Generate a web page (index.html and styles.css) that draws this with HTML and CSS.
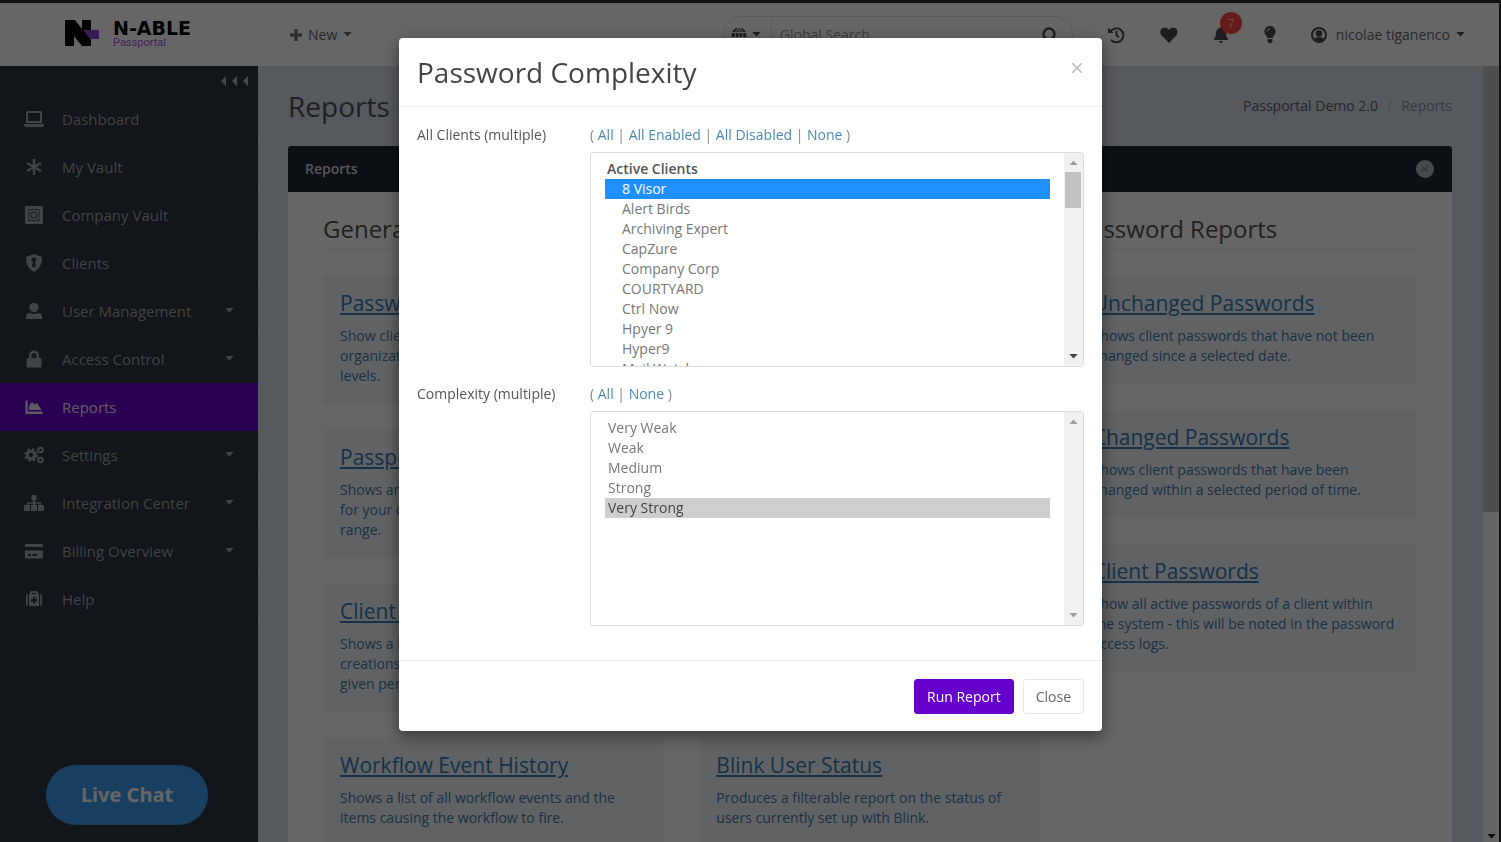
FILE: index.html
```html
<!DOCTYPE html>
<html lang="en">
<head>
<meta charset="utf-8">
<title>Passportal - Reports</title>
<link rel="stylesheet" href="styles.css">
</head>
<body>
<svg class="sprite" aria-hidden="true">
  <symbol id="caret" viewBox="0 0 10 6"><path d="M0 0h10L5 5.5z"/></symbol>
  <symbol id="plus" viewBox="0 0 12 12"><path d="M4.5 0h3v4.500H12v3H7.500V12h-3V7.500H0v-3h4.500z"/></symbol>
</svg>

<header class="topbar">
  <a class="logo" href="#">
    <svg class="logo-mark" viewBox="0 0 35 27" aria-hidden="true">
      <path class="purple" d="M17 10h17v9H24z"/>
      <path d="M0 0h10l7 9V0h9v10h-8l8 10v6h-9L9 16v10H0z"/>
    </svg>
    <span class="logo-text"><strong>N-ABLE</strong><small>Passportal</small></span>
  </a>
  <button class="plain new-button"><svg class="i12"><use href="#plus"/></svg>New<svg class="caret"><use href="#caret"/></svg></button>
  <form class="search" role="search">
    <button type="button" class="plain scope" aria-label="Search scope">
      <svg class="i16" viewBox="0 0 16 16"><circle cx="8" cy="8" r="7.500"/><path class="cut" d="M0 5.500h16M0 10.500h16M8 0v16M8 0C3 4 3 12 8 16M8 0c5 4 5 12 0 16"/></svg>
      <svg class="caret"><use href="#caret"/></svg>
    </button>
    <input type="search" placeholder="Global Search" aria-label="Global Search">
    <button type="button" class="plain go" aria-label="Search"><svg class="i16 line" viewBox="0 0 16 16"><circle cx="7" cy="7" r="5.500"/><path d="M11 11l4 4"/></svg></button>
  </form>
  <nav class="tools" aria-label="Tools">
    <button class="plain" aria-label="History"><svg class="i18 line thin" viewBox="0 0 18 18"><path d="M3.500 5.500A7 7 0 1 1 4 13.800M9.500 5v4.500l2.500 1.700"/><path class="solid" d="M1 1.500v5.500h5.500z"/></svg></button>
    <button class="plain" aria-label="Favorites"><svg class="i18" viewBox="0 0 18 18"><path d="M9 17L1.600 9.400C-.2 7.500 0 4.200 2 2.600c2-1.700 4.600-1.200 6.200.5l.8.900.8-.9c1.600-1.700 4.200-2.200 6.200-.5 2 1.600 2.200 4.900.4 6.800z"/></svg></button>
    <button class="plain bell" aria-label="Notifications"><svg class="i16" viewBox="0 0 16 16"><path d="M8 0c.7 0 1.200.5 1.200 1.100C11.600 1.700 13 3.600 13 6c0 3.500 1 4.600 2 5.600.4.500.1 1.400-.8 1.400H1.800C.9 13 .6 12.100 1 11.600 2 10.600 3 9.500 3 6c0-2.400 1.400-4.300 3.800-4.900C6.800.5 7.300 0 8 0zM6 14h4a2 2 0 0 1-4 0z"/></svg><span class="badge">7</span></button>
    <button class="plain bulb" aria-label="Tips"><svg viewBox="0 0 12 17"><path d="M6 0a5.500 5.500 0 0 1 4.300 9C9.400 10.100 8.800 11 8.600 12H3.400c-.2-1-.8-1.900-1.700-3A5.500 5.500 0 0 1 6 0zM3.500 13h5v2L7.500 17h-3l-1-2z"/><path class="cut" d="M3.200 5.500Q3.200 3 6 2.700"/></svg></button>
    <button class="plain user"><svg class="i16" viewBox="0 0 16 16"><circle class="ring" cx="8" cy="8" r="7"/><circle cx="8" cy="6.500" r="3.200"/><path d="M2.500 12.200C3.800 10.500 5.500 10.200 8 10.200s4.200.3 5.500 2C12.300 14 10.300 15 8 15s-4.300-1-5.500-2.800z"/></svg><span>nicolae tiganenco</span><svg class="caret"><use href="#caret"/></svg></button>
  </nav>
</header>

<div class="shell">
  <aside class="sidebar">
    <button class="plain collapse" aria-label="Collapse menu"><svg viewBox="0 0 28 10"><path d="M5 0v10L0 5zM16 0v10l-5-5zM27 0v10l-5-5z"/></svg></button>
    <nav class="menu" aria-label="Main">
      <a href="#"><svg viewBox="0 0 20 18"><path fill-rule="evenodd" d="M3.500 1h13A1.500 1.500 0 0 1 18 2.500V13H2V2.500A1.500 1.500 0 0 1 3.500 1zM4 3v8h12V3zM0 14h20v1a2 2 0 0 1-2 2H2a2 2 0 0 1-2-2z"/></svg><span>Dashboard</span></a>
      <a href="#"><svg viewBox="0 0 20 18"><path class="stroke" d="M10 1v16M3 5l14 8M17 5L3 13"/></svg><span>My Vault</span></a>
      <a href="#"><svg viewBox="0 0 20 18"><path fill-rule="evenodd" d="M2 0h16a1 1 0 0 1 1 1v16a1 1 0 0 1-1 1H2a1 1 0 0 1-1-1V1a1 1 0 0 1 1-1zM4.500 3v12h11V3z"/><path fill-rule="evenodd" d="M5.200 3.700h9.600v10.600H5.200zM10 5.500a3.500 3.500 0 1 0 0 7 3.500 3.500 0 0 0 0-7z"/><circle cx="10" cy="9" r="2.600"/></svg><span>Company Vault</span></a>
      <a href="#"><svg viewBox="0 0 20 18"><path fill-rule="evenodd" d="M10 0l8 3c0 7-2.500 12-8 15C4.500 15 2 10 2 3zm0 3.500a2.200 2.200 0 0 0-1.200 4.200L8 13h4l-.8-5.300A2.200 2.200 0 0 0 10 3.500z"/></svg><span>Clients</span></a>
      <a href="#"><svg viewBox="0 0 20 18"><circle cx="10" cy="5.500" r="4.700"/><path d="M2 17v-2.500C2 12 4 11 6 11a9 9 0 0 0 8 0c2 0 4 1 4 3.500V17z"/></svg><span>User Management</span><svg class="caret"><use href="#caret"/></svg></a>
      <a href="#"><svg viewBox="0 0 20 18"><path fill-rule="evenodd" d="M5 8V5.500a5 5 0 0 1 10 0V8h1a1.500 1.500 0 0 1 1.500 1.500V16a1.500 1.500 0 0 1-1.500 1.500H4A1.500 1.500 0 0 1 2.500 16V9.500A1.500 1.500 0 0 1 4 8zm2.500 0h5V5.500a2.500 2.500 0 0 0-5 0z"/></svg><span>Access Control</span><svg class="caret"><use href="#caret"/></svg></a>
      <a href="#" class="active" aria-current="page"><svg viewBox="0 0 20 18"><path d="M1.500 2.500h2.200v11H18.500V16h-17zM5 12V8l3-4 2.500 2.500L13 5l4.500 7z"/></svg><span>Reports</span></a>
      <a href="#"><svg viewBox="0 0 20 18"><circle class="gear" cx="7" cy="9" r="3.700"/><circle class="teeth" cx="7" cy="9" r="5.700"/><circle class="ring" cx="16.500" cy="4" r="2.300"/><circle class="ring" cx="16.500" cy="14" r="2.300"/></svg><span>Settings</span><svg class="caret"><use href="#caret"/></svg></a>
      <a href="#"><svg viewBox="0 0 20 18"><path d="M7.500 1h5v5H11v2.200h6V11h3v6h-6v-6h1.500V9.700H11V11h2v6H7v-6h2V9.700H4.500V11H6v6H0v-6h3V8.200h6V6H7.500z"/></svg><span>Integration Center</span><svg class="caret"><use href="#caret"/></svg></a>
      <a href="#"><svg viewBox="0 0 20 18"><path fill-rule="evenodd" d="M1.500 2h17l.5 3H1zM1 8.500h18V15a1.500 1.500 0 0 1-1.500 1.500h-15A1.500 1.500 0 0 1 1 15zM4 12v2h3v-2zm4.500 0v2H13v-2z"/></svg><span>Billing Overview</span><svg class="caret"><use href="#caret"/></svg></a>
      <a href="#"><svg viewBox="0 0 20 18"><path fill-rule="evenodd" d="M6 4V2.500A1.500 1.500 0 0 1 7.500 1h5A1.500 1.500 0 0 1 14 2.500V4h1v12H5V4zm2 0h4V3H8zm1 3v2H7v2.500h2v2h2.200v-2H13V9h-1.800V7zM3.800 4v12A2 2 0 0 1 2 14V6a2 2 0 0 1 1.800-2zm12.400 0A2 2 0 0 1 18 6v8a2 2 0 0 1-1.800 2z"/></svg><span>Help</span></a>
    </nav>
  </aside>

  <main class="page">
    <div class="page-head">
      <h1>Reports</h1>
      <nav class="crumbs" aria-label="Breadcrumb"><a href="#">Passportal Demo 2.0</a><i>/</i><span>Reports</span></nav>
    </div>
    <section class="panel">
      <div class="panel-head"><h2>Reports</h2><button class="plain" aria-label="Close panel"><svg class="close-dot" viewBox="0 0 18 18"><circle cx="9" cy="9" r="9"/><path d="M6 6l6 6M12 6l-6 6"/></svg></button></div>
      <div class="columns">
        <div class="column">
          <h3>General Reports</h3>
          <a class="card" href="#"><b>Password Complexity</b><span>Show client passwords in your<br>organization by their complexity<br>levels.</span></a>
          <a class="card" href="#"><b>Passportal Activity</b><span>Shows an overview of the activity<br>for your organization in a date<br>range.</span></a>
          <a class="card" href="#"><b>Client Activity</b><span>Shows a list of all client<br>creations and changes over a<br>given period.</span></a>
          <a class="card" href="#"><b>Workflow Event History</b><span>Shows a list of all workflow events and the<br>items causing the workflow to fire.</span></a>
        </div>
        <div class="column">
          <h3>User Reports</h3>
          <a class="card" href="#"><b>User Activity</b><span>Shows the activity of each user<br>of your organization in a date<br>range.</span></a>
          <a class="card" href="#"><b>User Access</b><span>Shows the clients and folders<br>that each user is able<br>to open.</span></a>
          <a class="card" href="#"><b>User Permissions</b><span>Shows the roles and groups<br>that are assigned to<br>each user.</span></a>
          <a class="card" href="#"><b>Blink User Status</b><span>Produces a filterable report on the status of<br>users currently set up with Blink.</span></a>
        </div>
        <div class="column">
          <h3>Password Reports</h3>
          <a class="card" href="#"><b>Unchanged Passwords</b><span>Shows client passwords that have not been<br>changed since a selected date.</span></a>
          <a class="card" href="#"><b>Changed Passwords</b><span>Shows client passwords that have been<br>changed within a selected period of time.</span></a>
          <a class="card" href="#"><b>Client Passwords</b><span>Show all active passwords of a client within<br>the system - this will be noted in the password<br>access logs.</span></a>
        </div>
      </div>
    </section>
  </main>
  <div class="page-bar" aria-hidden="true"><i class="thumb"></i><svg class="arrow"><use href="#caret"/></svg></div>
</div>

<button class="live-chat">Live Chat</button>

<div class="backdrop">
  <div class="modal" role="dialog" aria-modal="true" aria-labelledby="modal-title">
    <div class="modal-head"><h2 id="modal-title">Password Complexity</h2><button class="plain" aria-label="Close"><svg viewBox="0 0 10 10"><path d="M0 0l10 10M10 0L0 10"/></svg></button></div>
    <form class="modal-body">
      <label for="clients">All Clients (multiple)</label>
      <div class="field">
        <div class="picks">( <a href="#">All</a> | <a href="#">All Enabled</a> | <a href="#">All Disabled</a> | <a href="#">None</a> )</div>
        <div class="listbox">
          <select id="clients" multiple>
            <optgroup label="Active Clients">
              <option selected>8 Visor</option>
              <option>Alert Birds</option>
              <option>Archiving Expert</option>
              <option>CapZure</option>
              <option>Company Corp</option>
              <option>COURTYARD</option>
              <option>Ctrl Now</option>
              <option>Hpyer 9</option>
              <option>Hyper9</option>
              <option>Mail Watch</option>
            </optgroup>
          </select>
          <div class="list-bar" aria-hidden="true"><svg class="arrow up"><use href="#caret"/></svg><i class="thumb"></i><svg class="arrow on"><use href="#caret"/></svg></div>
        </div>
      </div>
      <label for="complexity">Complexity (multiple)</label>
      <div class="field">
        <div class="picks">( <a href="#">All</a> | <a href="#">None</a> )</div>
        <div class="listbox">
          <select id="complexity" class="idle" multiple>
            <option>Very Weak</option>
            <option>Weak</option>
            <option>Medium</option>
            <option>Strong</option>
            <option selected>Very Strong</option>
          </select>
          <div class="list-bar" aria-hidden="true"><svg class="arrow up"><use href="#caret"/></svg><svg class="arrow"><use href="#caret"/></svg></div>
        </div>
      </div>
    </form>
    <div class="modal-foot"><button class="run">Run Report</button><button class="close">Close</button></div>
  </div>
</div>
</body>
</html>
```
FILE: styles.css
```css
* { box-sizing: border-box; }
body {
  margin: 0;
  height: 100vh;
  overflow: hidden;
  display: flex;
  flex-direction: column;
  border-top: 3px solid #111213;
  border-right: 2px solid #111213;
  font: 14px/20px "Open Sans", sans-serif;
  color: #676a6c;
}
a { color: inherit; text-decoration: none; }
h1, h2, h3 { margin: 0; font-weight: 400; }
svg { fill: currentColor; display: block; flex: none; }
.sprite { position: absolute; width: 0; height: 0; }
.plain { border: 0; padding: 0; background: none; color: inherit; font: inherit; display: flex; align-items: center; }
.caret { width: 9px; height: 5px; }
.i12 { width: 12px; height: 12px; }
.i16 { width: 16px; height: 16px; }
.i18 { width: 18px; height: 18px; }
.cut { stroke: #fff; fill: none; }
.line { fill: none; stroke: currentColor; stroke-width: 2.5; }
.thin { stroke-width: 2; }
.solid { fill: currentColor; stroke: none; }

.topbar { flex: none; height: 63px; display: flex; align-items: center; background: #fff; padding: 0 34px 0 65px; color: #4c4c52; }
.logo { display: flex; gap: 13px; width: 225px; color: #000; }
.logo-mark { width: 35px; height: 27px; }
.purple { fill: #8a3fd1; }
.logo-text { display: flex; flex-direction: column; }
.logo-text strong { font: bold 19px/16px "DejaVu Sans", sans-serif; }
.logo-text small { font: 11px/14px Roboto, sans-serif; color: #9a55d8; }
.new-button { gap: 6px; color: #66666a; }
.search { display: flex; align-items: center; margin: 0 0 0 auto; width: 350px; height: 38px; border: 1px solid #e0e0e0; border-radius: 19px; padding-right: 14px; }
.scope { gap: 5px; width: 48px; height: 100%; justify-content: flex-end; padding-right: 10px; border-right: 1px solid #e0e0e0; }
.search input { flex: 1; min-width: 0; border: 0; outline: 0; background: none; font: inherit; padding: 0 8px; }
.search input::placeholder { color: #999; }
.tools { display: flex; align-items: center; margin-left: 34px; }
.tools button + button { margin-left: 35px; }
.bell { position: relative; }
.badge { position: absolute; left: 7px; top: -15px; width: 22px; height: 22px; border-radius: 50%; background: #ff4545; color: #ffc0a0; line-height: 22px; font-size: 13px; text-align: center; }
.tools .bulb svg { width: 12px; height: 17px; }
.tools .user { gap: 6px; }
.user span { padding-left: 3px; color: #66666a; }

.shell { flex: 1; min-height: 0; display: flex; }
.sidebar { flex: none; width: 258px; background: #2e3640; }
.collapse { height: 29px; margin-left: auto; padding-right: 9px; color: #b4bac2; }
.collapse svg { width: 28px; height: 10px; }
.menu { display: flex; flex-direction: column; color: #a4a9b0; font-size: 15px; }
.menu a { display: flex; align-items: center; gap: 18px; height: 48px; padding: 0 24px; border-bottom: 1px solid #2a313b; }
.menu a > svg:first-child { width: 20px; height: 18px; }
.menu span { flex: 1; }
.menu .active { background: #6600cc; border-color: #6600cc; color: #f0e6fa; }
.stroke { stroke: currentColor; stroke-width: 2.5; }
.gear, .teeth, .ring { fill: none; stroke: currentColor; }
.gear { stroke-width: 3; }
.teeth { stroke-width: 2; stroke-dasharray: 2.5 2; }
.ring { stroke-width: 2; }

.page { flex: 1; min-width: 0; overflow: hidden; background: #d8dee8; padding: 0 31px 0 30px; display: flex; flex-direction: column; }
.page-bar { flex: none; width: 16px; display: flex; flex-direction: column; justify-content: space-between; background: #fafafa; color: #222; }
.page-bar .thumb { height: 57.5%; background: #c4c4c4; }
.page-bar .arrow { margin: 0 4px 3px; }
.arrow { width: 9px; height: 5px; align-self: center; }
.page-head { flex: none; height: 80px; display: flex; align-items: center; justify-content: space-between; }
.page-head h1 { font-size: 28px; line-height: 36px; color: #4e5258; }
.crumbs { display: flex; gap: 9px; }
.crumbs i { color: #bcc2cc; font-style: normal; }
.crumbs span { color: #8a8e96; }
.crumbs a { color: #5c6068; }
.panel { flex: 1; background: #fff; border-radius: 3px 3px 0 0; }
.panel-head { height: 46px; display: flex; align-items: center; justify-content: space-between; padding: 0 18px 0 17px; background: #202834; border-radius: 3px 3px 0 0; color: #d8dade; }
.panel-head h2 { font-size: 14px; font-weight: 600; }
.close-dot { width: 18px; height: 18px; fill: #b4b8be; }
.close-dot path { stroke: #8a9098; stroke-width: 1.5; }
.columns { display: grid; grid-template-columns: repeat(3, minmax(0, 1fr)); gap: 36px; padding: 20px 36px 0 35px; }
.column { display: flex; flex-direction: column; gap: 26px; }
.column h3 { font-size: 24px; line-height: 34px; height: 38px; border-bottom: 1px solid #eee; color: #505050; }
.card { display: block; background: #f1f4f7; padding: 12px 17px 18px; color: #4478a8; white-space: nowrap; }
.card b { display: block; margin-bottom: 8px; font-size: 21px; line-height: 30px; font-weight: 400; text-decoration: underline; color: #337ab7; }
.card span { display: block; }

.live-chat { position: fixed; left: 46px; bottom: 17px; width: 162px; height: 60px; border: 0; border-radius: 30px; background: #409df0; color: #fff; font: bold 20px/24px "Noto Sans", sans-serif; }

.backdrop { position: fixed; inset: 3px 2px 0 0; display: flex; justify-content: center; align-items: flex-start; background: rgba(0, 0, 0, 0.6); padding: 35px 0 0 2px; overflow: hidden; }
.modal { width: 703px; background: #fff; border-radius: 4px; box-shadow: 0 5px 16px rgba(0, 0, 0, 0.5); color: #555; }
.modal-head { display: flex; justify-content: space-between; padding: 16px 20px 16px 18px; border-bottom: 1px solid #eee; }
.modal-head h2 { font-size: 28px; line-height: 36px; color: #444; }
.modal-head svg { width: 10px; height: 10px; stroke: #bbb; stroke-width: 1.5; margin-bottom: 8px; }
.modal-body { display: grid; grid-template-columns: 173px 1fr; row-gap: 17px; padding: 18px 18px 34px; }
.picks { margin-bottom: 7px; color: #888; }
.picks a { color: #4a8ab5; }
.listbox { display: flex; height: 215px; border: 1px solid #ddd; border-radius: 3px; overflow: hidden; }
.list-bar { flex: none; width: 19px; display: flex; flex-direction: column; background: #f1f1f1; padding: 7px 0; color: #a0a0a0; }
.list-bar .thumb { height: 36px; margin: 7px 2px 0 1px; background: #c1c1c1; }
.list-bar .arrow:last-child { margin-top: auto; }
.list-bar .up { transform: rotate(180deg); }
.list-bar .on { color: #444; }
select { display: block; flex: 1; min-width: 0; height: 100%; padding: 6px 14px; border: 0; background: #fff; font: inherit; color: #777; outline: 0; }
option { min-height: 20px; padding: 0 3px; line-height: 20px; }
optgroup { font-weight: 600; padding: 0; color: #555; }
optgroup option { font-weight: 400; padding-left: 17px; color: #777; }
option:checked { background: #1e90ff linear-gradient(#1e90ff, #1e90ff); color: #fff; }
.idle option:checked { background: #cecece linear-gradient(#cecece, #cecece); color: #444; }
.modal-foot { display: flex; justify-content: flex-end; gap: 9px; padding: 18px 18px 17px; border-top: 1px solid #eee; }
.modal-foot button { height: 35px; border-radius: 3px; font: inherit; padding: 0 12px; }
.modal-foot .run { border: 1px solid #6600cc; background: #6600cc; color: #fff; }
.modal-foot .close { border: 1px solid #e7e7e7; background: #fff; color: #666; }
```
